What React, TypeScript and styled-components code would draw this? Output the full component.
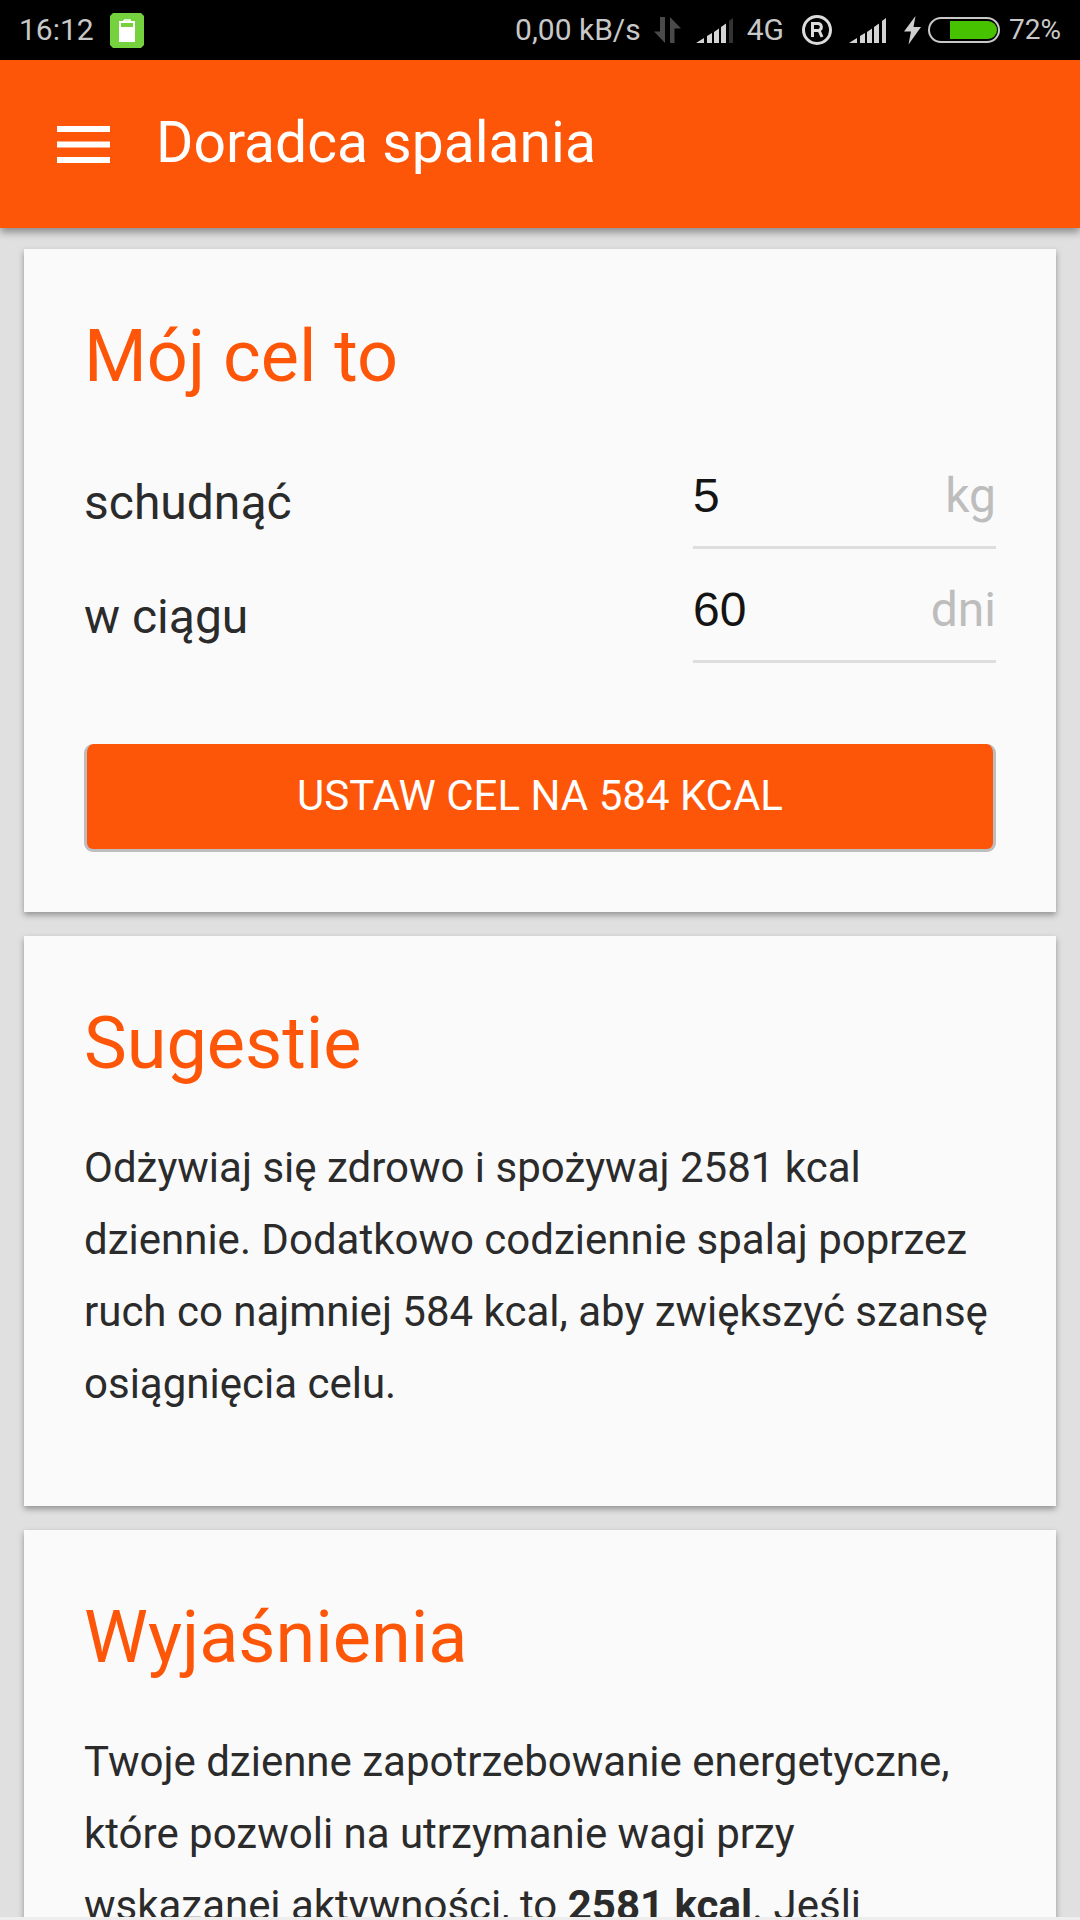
import React from "react";
import styled, { createGlobalStyle } from "styled-components";

const Global = createGlobalStyle`
  html, body { margin: 0; padding: 0; background: #e0e0e0; }
  body { font-family: Roboto, "Liberation Sans", sans-serif; }
`;

const Screen = styled.div`
  width: 1080px;
  height: 1920px;
  display: flex;
  flex-direction: column;
  overflow: hidden;
  background: #e0e0e0;
`;

const StatusBar = styled.div`
  height: 60px;
  flex: none;
  background: #000;
  color: #c8c8c8;
  display: flex;
  align-items: center;
  justify-content: space-between;
  padding: 0 19px;
  font-size: 30px;
  line-height: 60px;
`;

const StatusGroup = styled.div`
  display: flex;
  align-items: center;
`;

const Percent = styled.span`
  font-size: 28px;
`;

const Gap = styled.span<{ $w: number }>`
  display: inline-block;
  flex: none;
  width: ${(p) => p.$w}px;
`;

const Icon = styled.svg`
  display: block;
  flex: none;
`;

const AppBar = styled.header`
  height: 168px;
  flex: none;
  background: #fe5609;
  color: #fff;
  display: flex;
  align-items: center;
  padding: 0 48px 0 57px;
  gap: 46px;
  box-shadow: 0 4px 8px rgba(0, 0, 0, 0.4);
  position: relative;
  z-index: 2;
`;

const AppTitle = styled.h1`
  margin: 0 0 2px;
  font-size: 57px;
  font-weight: 400;
  line-height: 64px;
`;

const Content = styled.main`
  flex: 1;
  min-height: 0;
  overflow: hidden;
  padding: 21px 24px 0;
  display: flex;
  flex-direction: column;
  gap: 24px;
`;

const Card = styled.section<{ $h?: number }>`
  flex: none;
  background: #fafafa;
  padding: 0 60px;
  box-shadow: 0 3px 6px rgba(0, 0, 0, 0.35);
  ${(p) => (p.$h ? `height: ${p.$h}px; box-sizing: border-box;` : "")}
`;

const Heading = styled.h2`
  margin: 0;
  padding-top: 66px;
  font-size: 72px;
  line-height: 84px;
  font-weight: 400;
  color: #fe5609;
`;

const Row = styled.div`
  display: flex;
  align-items: center;
  height: 114px;
  justify-content: space-between;
`;

const RowLabel = styled.span`
  font-size: 48px;
  color: #2b2b2b;
  padding-top: 20px;
`;

const Field = styled.div`
  box-sizing: border-box;
  width: 303px;
  height: 114px;
  border-bottom: 3px solid #dedede;
  display: flex;
  justify-content: space-between;
  align-items: center;
  font-size: 48px;
  padding-top: 10px;
`;

const FieldValue = styled.span`
  color: #141414;
  font-family: "Liberation Sans", Arial, sans-serif;
`;

const FieldUnit = styled.span`
  color: #bdbdbd;
`;

const Fields = styled.div`
  padding-top: 36px;
`;

const Action = styled.button`
  display: block;
  box-sizing: border-box;
  width: 100%;
  height: 108px;
  margin-top: 81px;
  background: #fe5609;
  color: #fff;
  border: 3px solid #bdbdbd;
  border-top: 0;
  border-radius: 9px;
  font-family: Roboto, sans-serif;
  font-size: 42px;
  text-transform: uppercase;
  padding: 0 0 2px;
`;

const Body = styled.p`
  margin: 0;
  padding-top: 46px;
  font-size: 42px;
  line-height: 72px;
  color: #2b2b2b;
`;

const BottomStrip = styled.div`
  height: 3px;
  flex: none;
  background: #eeeeee;
`;

const Signal = ({ dim }: { dim?: boolean }) => (
  <Icon width="37" height="25" viewBox="0 0 37 25">
    <path d="M0 25 L8 20 V25 Z M11 25 V18 L16 15 V25 Z M18 25 V14 L23 10.500 V25 Z M25 25 V9 L30 5.500 V25 Z" fill="#d4d4d4" />
    <path d="M33 25 V3 L37 0 V25 Z" fill={dim ? "#333333" : "#d4d4d4"} />
  </Icon>
);

export default function App() {
  return (
    <Screen>
      <Global />
      <StatusBar>
        <StatusGroup>
          <span>16:12</span>
          <Gap $w={16} />
          <Icon width="34" height="35" viewBox="0 0 34 35">
            <path d="M3 0H31L34 3V32L31 35H3L0 32V3Z" fill="#76d13f" />
            <path d="M14 7h6v1.500M14 7v1.500" fill="none" stroke="#fff" strokeWidth="1.500" />
            <rect x="10" y="9" width="14" height="19" fill="none" stroke="#fff" strokeWidth="2" />
            <rect x="11" y="14" width="12" height="13" fill="#fff" />
          </Icon>
        </StatusGroup>
        <StatusGroup>
          <span>0,00 kB/s</span>
          <Gap $w={13} />
          <Icon width="27" height="26" viewBox="0 0 27 26">
            <path d="M6 0h5v26L0 14.500h6z" fill="#4a4a4a" />
            <path d="M16 26V0l11 11.500h-6.500V26z" fill="#4a4a4a" />
          </Icon>
          <Gap $w={15} />
          <Signal dim />
          <Gap $w={14} />
          <span>4G</span>
          <Gap $w={18} />
          <Icon width="30" height="30" viewBox="0 0 30 30">
            <circle cx="15" cy="15" r="13.500" fill="none" stroke="#dcdcdc" strokeWidth="3" />
            <path d="M10.500 22V8.500h5.500a3.500 3.500 0 0 1 1 6.800L20 22M10.500 15.500h5.500" fill="none" stroke="#dcdcdc" strokeWidth="3" />
          </Icon>
          <Gap $w={17} />
          <Signal />
          <Gap $w={18} />
          <Icon width="17" height="29" viewBox="0 0 17 29">
            <path d="M11.500 0 L0 15.500 H7 L4.500 28.500 L17 11 H9.500 Z" fill="#d0d0d0" />
          </Icon>
          <Gap $w={7} />
          <Icon width="72" height="26" viewBox="0 0 72 26">
            <rect x="1" y="1" width="70" height="24" rx="12" fill="none" stroke="#c8c8c8" strokeWidth="2" />
            <path d="M22 4H60a9 9 0 0 1 0 18H22Z" fill="#47c200" />
          </Icon>
          <Gap $w={9} />
          <Percent>72%</Percent>
        </StatusGroup>
      </StatusBar>
      <AppBar>
        <Icon width="53" height="37" viewBox="0 0 53 37">
          <path d="M0 0h53v6H0zM0 15.500h53v6H0zM0 31h53v6H0z" fill="#fff" />
        </Icon>
        <AppTitle>Doradca spalania</AppTitle>
      </AppBar>
      <Content>
        <Card $h={663}>
          <Heading>Mój cel to</Heading>
          <Fields>
            <Row>
              <RowLabel>schudnąć</RowLabel>
              <Field>
                <FieldValue>5</FieldValue>
                <FieldUnit>kg</FieldUnit>
              </Field>
            </Row>
            <Row>
              <RowLabel>w ciągu</RowLabel>
              <Field>
                <FieldValue>60</FieldValue>
                <FieldUnit>dni</FieldUnit>
              </Field>
            </Row>
          </Fields>
          <Action>Ustaw cel na 584 kcal</Action>
        </Card>
        <Card $h={570}>
          <Heading>Sugestie</Heading>
          <Body>
            Odżywiaj się zdrowo i spożywaj 2581 kcal dziennie. Dodatkowo codziennie spalaj poprzez ruch co najmniej 584 kcal, aby zwiększyć szansę osiągnięcia celu.
          </Body>
        </Card>
        <Card>
          <Heading>Wyjaśnienia</Heading>
          <Body>
            Twoje dzienne zapotrzebowanie energetyczne, które pozwoli na utrzymanie wagi przy wskazanej aktywności, to <strong>2581 kcal</strong>. Jeśli chcesz schudnąć, spalaj więcej.
          </Body>
        </Card>
      </Content>
      <BottomStrip />
    </Screen>
  );
}
